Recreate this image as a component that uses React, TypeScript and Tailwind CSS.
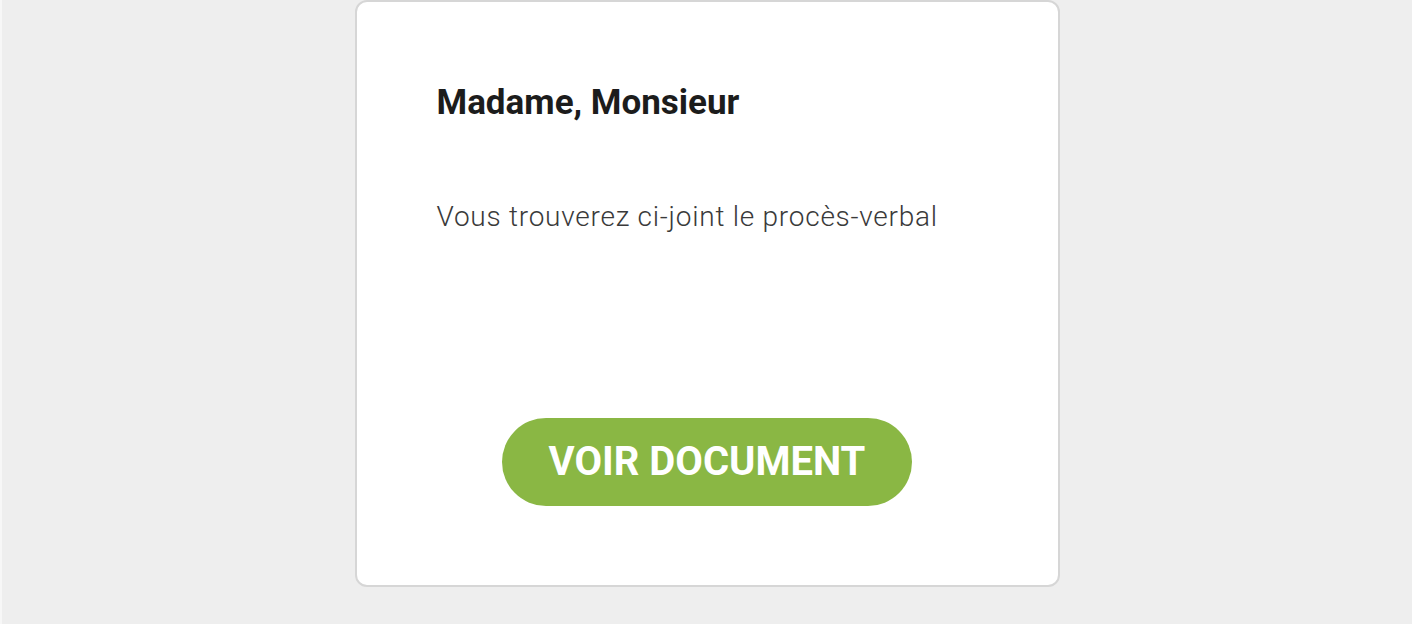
export default function App() {
  return (
    <div className="flex min-h-[624px] w-full bg-[#eeeeee] font-['Roboto',sans-serif]">
      <div className="w-[2px] bg-[#f7f7f7]" />
      <div className="flex flex-1 justify-center">
        <div className="flex h-[587px] w-[705px] flex-col rounded-[12px] border-2 border-[#d6d6d6] bg-white px-[80px] pt-[81px]">
          <h1 className="text-[35px] font-bold leading-[40px] text-[#1c1c1c]">Madame, Monsieur</h1>
          <p className="mt-[77px] text-[28px] font-light leading-[34px] tracking-[0.75px] text-[#3a3a3a]">
            Vous trouverez ci-joint le procès-verbal
          </p>
          <div className="mt-[184px] flex justify-center">
            <button
              type="button"
              className="h-[88px] w-[410px] rounded-full bg-[#8ab744] text-[40px] font-bold uppercase text-white"
            >
              Voir document
            </button>
          </div>
        </div>
      </div>
    </div>
  );
}
